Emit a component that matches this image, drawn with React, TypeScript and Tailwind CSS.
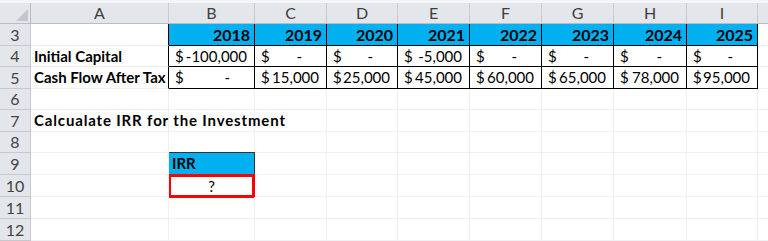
import React from "react";

const cols = [31, 138, 86, 72, 71, 72, 72, 72, 73, 71];
const rowHeights = [22, 21, 22, 21, 22, 21, 22, 22, 22, 22];
const letters = ["A", "B", "C", "D", "E", "F", "G", "H", "I"];
const years = ["2018", "2019", "2020", "2021", "2022", "2023", "2024", "2025"];
const r4 = ["-100,000", "-", "-", "-5,000", "-", "-", "-", "-"];
const r5 = ["-", "15,000", "25,000", "45,000", "60,000", "65,000", "78,000", "95,000"];

function Money({ v }: { v: string }) {
  const dash = v === "-";
  return (
    <div className="flex h-full items-center justify-between pl-[6px] pr-[7px]">
      <span>$</span>
      {dash ? <span className="mr-[17px]">-</span> : <span>{v}</span>}
    </div>
  );
}

export default function App() {
  const gridCols = cols.map((c) => `${c}px`).join(" ") + " 1fr";
  return (
    <div
      className="w-[768px] h-[241px] overflow-hidden bg-white text-[15px] text-black"
      style={{ fontFamily: "Lato, 'Noto Sans', sans-serif" }}
    >
      <div className="h-[3px] bg-[#f4f5f7]" />
      <div className="flex h-[21px] bg-[#e3e6ea] border-b border-[#b9bdc3] text-[#3f3f3f] text-[16px]">
        <div className="w-[31px] shrink-0 border-r border-[#b9bdc3] relative">
          <div className="absolute right-[2px] bottom-[2px] w-0 h-0 border-l-[12px] border-l-transparent border-b-[12px] border-b-[#c3c7cc]" />
        </div>
        {letters.map((l, i) => (
          <div
            key={l}
            style={{ width: cols[i + 1] }}
            className="shrink-0 border-r border-[#c8ccd1] flex items-center justify-center"
          >
            {l}
          </div>
        ))}
        <div className="flex-1" />
      </div>
      <div
        className="grid"
        style={{
          gridTemplateColumns: gridCols,
          gridTemplateRows: rowHeights.map((h) => `${h}px`).join(" "),
        }}
      >
        {rowHeights.map((_, ri) => {
          const rowNum = ri + 3;
          const cells: React.ReactNode[] = [];
          cells.push(
            <div
              key={`h${rowNum}`}
              className="bg-[#e3e6ea] border-r border-b border-[#c5c9ce] flex items-center justify-center text-[#444] text-[16px]"
            >
              {rowNum}
            </div>
          );
          let aText = "";
          if (rowNum === 4) aText = "Initial Capital";
          if (rowNum === 5) aText = "Cash Flow After Tax";
          if (rowNum === 7) aText = "Calcualate IRR for the Investment";
          cells.push(
            <div
              key={`a${rowNum}`}
              className={`relative font-bold flex items-center pl-[3px] whitespace-nowrap border-b border-[#eef0f2] ${
                rowNum >= 3 && rowNum <= 5 ? "border-r border-r-black" : "border-r border-r-[#eef0f2]"
              } ${rowNum === 7 ? "overflow-visible z-10 tracking-[0.85px]" : ""}`}
            >
              {aText}
            </div>
          );
          for (let ci = 0; ci < 8; ci++) {
            const key = `c${rowNum}-${ci}`;
            if (rowNum === 3) {
              cells.push(
                <div
                  key={key}
                  className="bg-[#00b0f0] border-r border-b border-black font-bold flex items-center justify-end pr-[4px] text-[16px]"
                >
                  {years[ci]}
                </div>
              );
            } else if (rowNum === 4 || rowNum === 5) {
              cells.push(
                <div key={key} className="border-r border-b border-black">
                  <Money v={rowNum === 4 ? r4[ci] : r5[ci]} />
                </div>
              );
            } else if (rowNum === 9 && ci === 0) {
              cells.push(
                <div
                  key={key}
                  className="bg-[#00b0f0] border border-[#333] font-bold flex items-center pl-[3px] -ml-px -mt-px"
                >
                  IRR
                </div>
              );
            } else if (rowNum === 10 && ci === 0) {
              cells.push(
                <div
                  key={key}
                  className="border-[3px] border-[#ff0000] flex items-center justify-center -ml-px -mt-px h-[24px]"
                >
                  ?
                </div>
              );
            } else {
              cells.push(<div key={key} className="border-b border-r border-[#eef0f2]" />);
            }
          }
          cells.push(<div key={`j${rowNum}`} className="border-b border-[#eef0f2]" />);
          return cells;
        })}
      </div>
    </div>
  );
}
